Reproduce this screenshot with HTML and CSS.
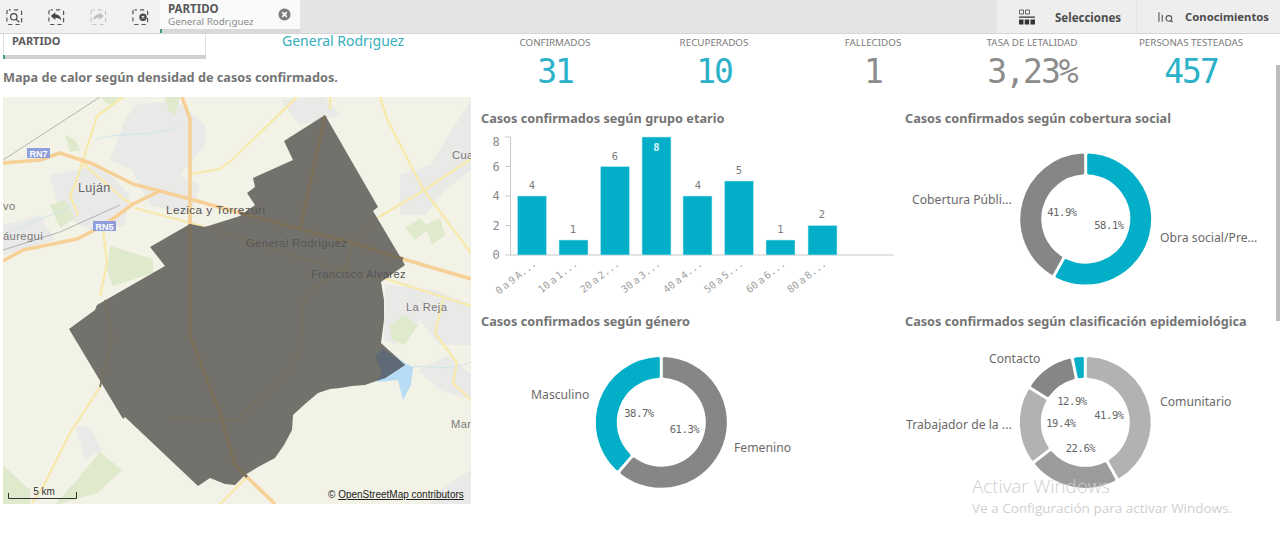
FILE: index.html
```html
<!DOCTYPE html>
<html lang="es">
<head>
<meta charset="utf-8">
<title>Casos confirmados</title>
<link rel="stylesheet" href="styles.css">
</head>
<body>
<header class="toolbar">
  <div class="tools">
    <svg class="tool" viewBox="0 0 18 18"><rect class="dash" x="1" y="1" width="16" height="16" rx="2"/><circle class="glyph-line" cx="8.500" cy="8.500" r="3.500"/><path class="glyph-line" d="M11 11l3.500 3.500"/></svg>
    <svg class="tool" viewBox="0 0 18 18"><rect class="dash" x="1" y="1" width="16" height="16" rx="2"/><path class="glyph" d="M3 7.500L8 3.500V6C11.500 6 14 8 14.500 12.500C13 10.500 11 9.500 8 9.500V12Z"/></svg>
    <svg class="tool faded" viewBox="0 0 18 18"><rect class="dash" x="1" y="1" width="16" height="16" rx="2"/><path class="glyph" d="M15 7.500L10 3.500V6C6.500 6 4 8 3.500 12.500C5 10.500 7 9.500 10 9.500V12Z"/></svg>
    <svg class="tool" viewBox="0 0 18 18"><rect class="dash" x="1" y="1" width="16" height="16" rx="2"/><circle class="glyph" cx="12" cy="9" r="4"/><path class="glyph-x" d="M10.500 7.500l3 3M13.500 7.500l-3 3"/></svg>
  </div>
  <div class="tab">
    <div class="tab-text">
      <div class="tab-name">PARTIDO</div>
      <div class="tab-value">General Rodr¡guez</div>
    </div>
    <svg class="tab-close" viewBox="0 0 14 14"><circle cx="7" cy="7" r="6.500"/><path d="M4.500 4.500l5 5M9.500 4.500l-5 5"/></svg>
  </div>
  <div class="spacer"></div>
  <div class="tb-btn tb-sel">
    <svg class="sel-icon" viewBox="0 0 16 16"><path class="sel-out" d="M.5 1h4v4h-4zM6.500 1h4v4h-4z"/><path class="sel-fill" d="M0 7.500h16v1.200H0zM0 10.500h4.500v5H0zM5.700 10.500h4.500v5H5.700zM11.500 10.500H16v5h-4.500z"/></svg>
    <span>Selecciones</span>
  </div>
  <div class="tb-btn tb-ins">
    <svg class="ins-icon" viewBox="0 0 18 12"><path d="M1 1v10M4.500 3.500v7.500"/><circle cx="11.500" cy="7.500" r="3"/><path d="M13.700 9.700l1.800 1.800"/></svg>
    <span>Conocimientos</span>
  </div>
</header>

<main class="sheet">
  <section class="left">
    <div class="left-top">
      <div class="sel-card"><span>PARTIDO</span></div>
      <div class="sel-value">General Rodr¡guez</div>
    </div>
    <h2 class="title map-title">Mapa de calor según densidad de casos confirmados.</h2>
    <svg class="map" viewBox="3 97 468 407">
      <rect x="3" y="97" width="468" height="407" fill="#f2f2e6"/>
      <g fill="#e9e9e7">
        <path d="M135 105L175 100 205 125 205 145 180 175 200 185 190 215 150 205 132 170 110 160 125 120Z"/>
        <path d="M50 175L100 165 130 195 125 225 95 232 60 215Z"/>
        <path d="M385 285L435 290 471 305 471 345 440 345 420 320 395 345 384 340Z"/>
        <path d="M418 370L450 355 471 375 471 400 440 390Z"/>
        <path d="M400 175L430 165 471 100 471 170 445 190 425 215 400 215Z"/>
        <path d="M280 100L325 97 340 115 300 125Z"/>
        <path d="M75 425L90 428 102 450 85 460Z"/>
        <path d="M3 225L40 215 55 240 3 255Z"/>
        <path d="M440 490L471 470 471 504 430 504Z"/>
      </g>
      <g fill="#dfe9cb">
        <path d="M110 246L153 259 153 273 113 286 107 270Z"/>
        <path d="M77 480L100 452 122 470 97 493 60 504 55 504Z"/>
        <path d="M3 465L30 490 30 504 3 504Z"/>
        <path d="M390 325L405 315 418 325 405 345 392 340Z"/>
        <path d="M405 228L420 218 430 228 415 240ZM425 225L440 218 445 235 432 245Z"/>
        <path d="M50 205L65 200 75 218 60 228Z"/>
        <path d="M165 97L180 97 175 115 168 110ZM100 97L120 97 110 105Z"/>
        <path d="M65 135L75 140 80 150 70 152Z"/>
      </g>
      <g class="rail">
        <path d="M3 160L100 97"/>
        <path d="M3 250L60 232 120 205"/>
      </g>
      <path class="water-line" d="M95 140C120 130 150 140 180 125M5 235C30 220 60 215 80 200M413 367C430 365 450 372 471 362"/>
      <g class="road-minor">
        <path d="M123 97L97 116 82 163 75 185 70 195 78 215"/>
        <path d="M190 174L220 169 233 159 297 97"/>
        <path d="M380 97L387 119 423 189 471 253"/>
        <path d="M471 159L423 191 377 218"/>
        <path d="M330 97L330 110"/>
        <path d="M135 208L190 223 205 227"/>
        <path d="M103 229L107 263 100 296"/>
        <path d="M100 387L70 433 43 487 32 503"/>
        <path d="M383 278L471 306"/>
        <path d="M443 300L435 333 457 363 453 383 471 400"/>
        <path d="M247 477L220 504"/>
        <path d="M82 163L125 200 133 204"/>
      </g>
      <g class="road-major">
        <path d="M3 163L40 160 60 153 93 164 133 184 160 191 190 199 233 211 300 229 353 243 403 259 471 279"/>
        <path d="M3 261L23 250 77 239 103 226 133 204 160 191"/>
        <path d="M182 97L190 119V224"/>
        <path d="M247 477L275 504"/>
      </g>
      <path class="lake" d="M382 345L405 363 413 367 411 385 403 400 398 380 377 382Z"/>
      <path class="district" d="M325 115L378 207 373 211 405 265 381 282 384 300 384 320 381 343 405 365 385 378 365 385 352 386 340 388 330 389 318 393 305 404 293 415 292 430 284 445 275 458 258 467 245 475 235 485 225 484 210 478 198 486 125 417 123 419 69 329 95 310 97 305 165 266 150 247 190 224 205 227 240 216 255 205 247 193 255 187 253 178 293 160 284 141Z"/>
      <path class="lake-in" d="M375 356L383 349 405 365 385 378 378 380 382 372Z"/>
      <g class="road-in">
        <path d="M190 224V336L220 413 235 465 247 477"/>
        <path d="M325 116L300 229"/>
        <path d="M240 213L300 229 353 243 403 259" stroke-width="4"/>
      </g>
      <g class="road-in thin">
        <path d="M377 218L353 243 347 266 307 293 302 306 303 333 295 363 237 420 170 418"/>
        <path d="M205 227L290 255 380 280"/>
        <path d="M105 300L112 337 100 387"/>
      </g>
      <g class="map-label">
        <text x="78" y="192" class="lbl-big">Luján</text>
        <text x="3" y="210">vo</text>
        <text x="3" y="240">áuregui</text>
        <text x="166" y="214" class="lbl-dark lbl-wide">Lezica y Torrezuri</text>
        <text x="246" y="247" class="lbl-dark">General Rodríguez</text>
        <text x="311" y="278" class="lbl-dark">Francisco Alvarez</text>
        <text x="406" y="311">La Reja</text>
        <text x="452" y="159">Cua</text>
        <text x="451" y="428">Mar</text>
      </g>
      <g class="shield">
        <rect x="27" y="148" width="23" height="10"/><text x="38.500" y="156.500">RN7</text>
        <rect x="93" y="221" width="23" height="10"/><text x="104.500" y="229.500">RN5</text>
      </g>
      <path class="scale" d="M8.500 493V498.500H76.500V492"/>
      <text x="44" y="495" class="scale-text" text-anchor="middle">5 km</text>
      <text x="328" y="498" class="attr">© <tspan text-decoration="underline">OpenStreetMap contributors</tspan></text>
    </svg>
  </section>

  <section class="right">
    <div class="kpis">
      <div class="kpi"><div class="kpi-label">CONFIRMADOS</div><div class="kpi-value teal">31</div></div>
      <div class="kpi"><div class="kpi-label">RECUPERADOS</div><div class="kpi-value teal">10</div></div>
      <div class="kpi"><div class="kpi-label">FALLECIDOS</div><div class="kpi-value">1</div></div>
      <div class="kpi"><div class="kpi-label">TASA DE LETALIDAD</div><div class="kpi-value">3,23%</div></div>
      <div class="kpi"><div class="kpi-label">PERSONAS TESTEADAS</div><div class="kpi-value teal">457</div></div>
    </div>
    <div class="charts">
      <article class="chart">
        <h2 class="title">Casos confirmados según grupo etario</h2>
        <svg class="plot" viewBox="481 129 424 182">
          <path class="axis" d="M505 137H510.500V255M505 166.500H510.500M505 196H510.500M505 225.500H510.500M505 255H894"/>
          <g class="tick">
            <text x="496" y="146">8</text><text x="496" y="171">6</text><text x="496" y="200">4</text><text x="496" y="230">2</text><text x="496" y="259">0</text>
          </g>
          <g class="bar">
            <rect x="517.500" y="196" width="29" height="59"/>
            <rect x="559" y="240" width="29" height="15"/>
            <rect x="600.500" y="166.500" width="29" height="88.500"/>
            <rect x="642" y="137" width="29" height="118"/>
            <rect x="683" y="196" width="29" height="59"/>
            <rect x="724.500" y="181" width="29" height="74"/>
            <rect x="766" y="240" width="29" height="15"/>
            <rect x="808" y="225.500" width="29" height="29.500"/>
          </g>
          <g class="val">
            <text x="532" y="189">4</text><text x="573" y="233">1</text><text x="615" y="160">6</text><text x="656.500" y="151" class="val-in">8</text><text x="698" y="189">4</text><text x="739" y="174">5</text><text x="780.500" y="233">1</text><text x="822" y="218">2</text>
          </g>
          <g class="cat">
            <text transform="translate(537 265) rotate(-38)">0 a 9 A...</text>
            <text transform="translate(578 265) rotate(-38)">10 a 1...</text>
            <text transform="translate(620 265) rotate(-38)">20 a 2...</text>
            <text transform="translate(661 265) rotate(-38)">30 a 3...</text>
            <text transform="translate(703 265) rotate(-38)">40 a 4...</text>
            <text transform="translate(744 265) rotate(-38)">50 a 5...</text>
            <text transform="translate(786 265) rotate(-38)">60 a 6...</text>
            <text transform="translate(827 265) rotate(-38)">80 a 8...</text>
          </g>
        </svg>
      </article>
      <article class="chart">
        <h2 class="title">Casos confirmados según cobertura social</h2>
        <svg class="plot" viewBox="905 129 371 182">
          <g transform="translate(1085.700 219)" class="donut">
            <path class="c-gray" d="M-33.800 54.300A64 64 0 0 1 -3 -63.900L-3 -45.900A46 46 0 0 0 -25 38.600Z"/>
            <path class="c-teal" d="M3 -63.900A64 64 0 1 1 -28.600 57.300L-19.800 41.500A46 46 0 1 0 3 -45.900Z"/>
          </g>
          <g class="pct"><text x="1062" y="216">41.9%</text><text x="1109" y="229">58.1%</text></g>
          <g class="dlabel"><text x="912" y="204">Cobertura Públi...</text><text x="1160" y="242">Obra social/Pre...</text></g>
        </svg>
      </article>
      <article class="chart">
        <h2 class="title">Casos confirmados según género</h2>
        <svg class="plot" viewBox="481 332 424 177">
          <g transform="translate(661.300 422.300)" class="donut">
            <path class="c-gray" d="M3 -63.900A64 64 0 1 1 -39.400 50.400L-27.700 36.700A46 46 0 1 0 3 -45.900Z"/>
            <path class="c-teal" d="M-44 46.500A64 64 0 0 1 -3 -63.900L-3 -45.900A46 46 0 0 0 -32.200 32.900Z"/>
          </g>
          <g class="pct"><text x="639" y="417">38.7%</text><text x="684.500" y="433">61.3%</text></g>
          <g class="dlabel"><text x="531" y="399">Masculino</text><text x="734" y="452">Femenino</text></g>
        </svg>
      </article>
      <article class="chart">
        <h2 class="title">Casos confirmados según clasificación epidemiológica</h2>
        <svg class="plot" viewBox="905 332 371 177">
          <g transform="translate(1085.300 422.300)" class="donut">
            <path class="c-l1" d="M3 -63.900A64 64 0 0 1 33.800 54.300L25 38.600A46 46 0 0 0 3 -45.900Z"/>
            <path class="c-l2" d="M28.600 57.300A64 64 0 0 1 -48.700 41.600L-34.500 30.500A46 46 0 0 0 19.800 41.500Z"/>
            <path class="c-l1" d="M-52.400 36.800A64 64 0 0 1 -55.800 -31.300L-40.500 -21.800A46 46 0 0 0 -38.100 25.800Z"/>
            <path class="c-gray" d="M-52.600 -36.400A64 64 0 0 1 -15.700 -62L-12.100 -44.400A46 46 0 0 0 -37.400 -26.800Z"/>
            <path class="c-teal" d="M-9.800 -63.200A64 64 0 0 1 -3 -63.900L-3 -45.900A46 46 0 0 0 -6.200 -45.600Z"/>
          </g>
          <g class="pct"><text x="1072" y="405">12.9%</text><text x="1109" y="419">41.9%</text><text x="1061" y="427">19.4%</text><text x="1080.500" y="452">22.6%</text></g>
          <g class="dlabel"><text x="989" y="363">Contacto</text><text x="1160" y="406">Comunitario</text><text x="906" y="429">Trabajador de la ...</text></g>
        </svg>
      </article>
    </div>
  </section>
</main>
<div class="scroll-thumb"></div>
<div class="watermark">
  <div class="wm-title">Activar Windows</div>
  <div class="wm-sub">Ve a Configuración para activar Windows.</div>
</div>
</body>
</html>
```

FILE: styles.css
```css
* { box-sizing: border-box; }
html, body { margin: 0; height: 537px; overflow: hidden; background: #fff; }
body { font-family: "Noto Sans", "Open Sans", sans-serif; color: #666; position: relative; }
h2 { margin: 0; }

.toolbar { display: flex; height: 34px; background: #e4e4e4; border-bottom: 1px solid #d6d6d6; }
.tools { width: 160px; display: flex; align-items: center; gap: 25.500px; padding: 0 0 0 6px; background: #f1f1f1; }
.tool { width: 16.500px; height: 16.500px; flex: none; margin-top: 1px; }
.tool.faded { opacity: .28; }
.dash { fill: none; stroke: #555; stroke-width: 1.300; stroke-dasharray: 4.500 3.500; stroke-dashoffset: 2.250; }
.glyph { fill: #444; }
.glyph-line { fill: none; stroke: #444; stroke-width: 1.300; }
.glyph-x { fill: none; stroke: #eee; stroke-width: 1.100; }

.tab { position: relative; width: 140px; height: 33px; background: #fafafa; border-bottom: 4px solid #d9d9d9; display: flex; align-items: flex-start; justify-content: space-between; padding: 2px 8px 0 8px; }
.tab::before { content: ""; position: absolute; left: 0; bottom: -4px; width: 2px; height: 4px; background: #3f9e6c; }
.tab-name { font-size: 11.500px; font-weight: 700; color: #595959; line-height: 14px; }
.tab-value { font-size: 9.800px; color: #8a8a8a; line-height: 12px; }
.tab-close { width: 13px; height: 13px; margin-top: 5.500px; margin-right: 1px; }
.tab-close circle { fill: #7c7c7c; }
.tab-close path { stroke: #fff; stroke-width: 1.700; }
.spacer { flex: 1; }

.tb-btn { display: flex; align-items: center; background: #eeeeee; font-weight: 700; color: #4c4c4c; height: 33px; }
.tb-sel { width: 140px; padding: 1px 0 0 22px; gap: 20px; border-right: 1px solid #e4e4e4; font-size: 11.500px; }
.tb-ins { width: 143px; padding-left: 21px; gap: 10px; font-size: 11.300px; }
.sel-icon { width: 16px; height: 16px; }
.sel-out { fill: none; stroke: #555; stroke-width: .9; }
.sel-fill { fill: #333; }
.ins-icon { width: 17px; height: 12px; fill: none; stroke: #555; stroke-width: 1.200; }

.sheet { display: grid; grid-template-columns: 472px 1fr; height: 503px; }
.left { padding-left: 3px; display: flex; flex-direction: column; }
.left-top { display: flex; height: 25px; }
.sel-card { position: relative; width: 203px; height: 25px; background: #fff; border-bottom: 4px solid #cfcfcf; border-left: 1px solid #e0e0e0; border-right: 1px solid #e0e0e0; padding: 0 0 0 8px; font-size: 11px; font-weight: 700; color: #5a5a5a; line-height: 13px; }
.sel-card::before { content: ""; position: absolute; left: -1px; bottom: -4px; width: 2px; height: 4px; background: #3f9e6c; }
.sel-value { margin-left: 76px; font-size: 14px; color: #35aebd; line-height: 14px; }
.title { font-size: 12.700px; font-weight: 700; color: #757575; line-height: 20px; white-space: nowrap; }
.chart .title { margin-bottom: 1px; }
.map-title { margin: 8px 0 10px; }
.map { display: block; width: 468px; height: 407px; flex: none; }

.rail path { fill: none; stroke: #999; stroke-width: .7; }
.water-line { fill: none; stroke: #cfe6e8; stroke-width: 1; }
.road-major path { fill: none; stroke: #f6d096; stroke-width: 3.600; stroke-linejoin: round; }
.road-minor path { fill: none; stroke: #f8e9aa; stroke-width: 2.200; stroke-linejoin: round; }
.lake { fill: #b7dcf6; }
.lake-in { fill: #5e6a76; }
.district { fill: #72716c; }
.road-in path { fill: none; stroke: #7c7058; stroke-width: 3; stroke-linejoin: round; }
.road-in.thin path { stroke: #77725f; stroke-width: 1.800; }
.map-label text { font-family: "Liberation Sans", Arial, sans-serif; font-size: 11.200px; fill: #7a7a7a; letter-spacing: .4px; }
.map-label .lbl-big { font-size: 12.500px; fill: #666; }
.map-label .lbl-dark { fill: #565656; }
.map-label .lbl-wide { font-size: 11.800px; }
.shield rect { fill: #8e9fdc; }
.shield text { font-family: "Liberation Sans", Arial, sans-serif; font-size: 9px; font-weight: 700; fill: #fff; text-anchor: middle; }
.scale { fill: none; stroke: #333; stroke-width: 1; }
.scale-text { font-family: "Liberation Sans", Arial, sans-serif; font-size: 10px; fill: #333; }
.attr { font-family: "Liberation Sans", Arial, sans-serif; font-size: 10px; fill: #222; }

.right { display: flex; flex-direction: column; }
.kpis { display: grid; grid-template-columns: repeat(5, 159px); height: 74px; padding-left: 3.500px; }
.kpi { text-align: center; }
.kpi-label { font-size: 9.800px; color: #7a7a7a; line-height: 18px; }
.kpi-value { font-family: "DejaVu Sans Mono", monospace; font-size: 33px; line-height: 40px; letter-spacing: -2px; color: #8c8c8c; }
.kpi-value.teal { color: #2bb1c8; }

.charts { display: grid; grid-template-columns: 424px 371px; grid-template-rows: 203px 198px; padding-left: 9px; }
.chart { display: flex; flex-direction: column; }
.plot { display: block; width: 100%; flex: 1; min-height: 0; }

.axis { fill: none; stroke: #c8c8c8; stroke-width: 1; }
.tick text { font-family: "DejaVu Sans Mono", monospace; font-size: 12px; fill: #8a8a8a; text-anchor: middle; }
.bar rect { fill: #03aec8; stroke: #bcecf2; stroke-width: .6; }
.val text { font-family: "DejaVu Sans Mono", monospace; font-size: 10.500px; fill: #7a7a7a; text-anchor: middle; }
.val .val-in { fill: #d8f6fa; font-weight: 700; }
.cat text { font-family: "DejaVu Sans Mono", monospace; font-size: 10px; fill: #a0a0a0; text-anchor: end; word-spacing: -4px; }

.donut path { stroke-width: 3; stroke-linejoin: round; }
.c-gray { fill: #868686; stroke: #868686; }
.c-teal { fill: #03aec8; stroke: #03aec8; }
.c-l1 { fill: #b2b2b2; stroke: #b2b2b2; }
.c-l2 { fill: #9c9c9c; stroke: #9c9c9c; }
.pct text { font-family: "DejaVu Sans Mono", monospace; font-size: 10.500px; fill: #666; text-anchor: middle; letter-spacing: -.4px; }
.dlabel text { font-family: "Noto Sans", sans-serif; font-size: 12.200px; fill: #6a6a6a; }

.scroll-thumb { position: absolute; left: 1276px; top: 65px; width: 4px; height: 256px; background: #bdbdbd; }
.watermark { position: absolute; left: 972px; top: 475px; color: #cfcfcf; font-family: "Open Sans", sans-serif; pointer-events: none; }
.wm-title { font-size: 18.800px; line-height: 23px; font-weight: 300; }
.wm-sub { font-size: 13.500px; line-height: 20px; }
```
